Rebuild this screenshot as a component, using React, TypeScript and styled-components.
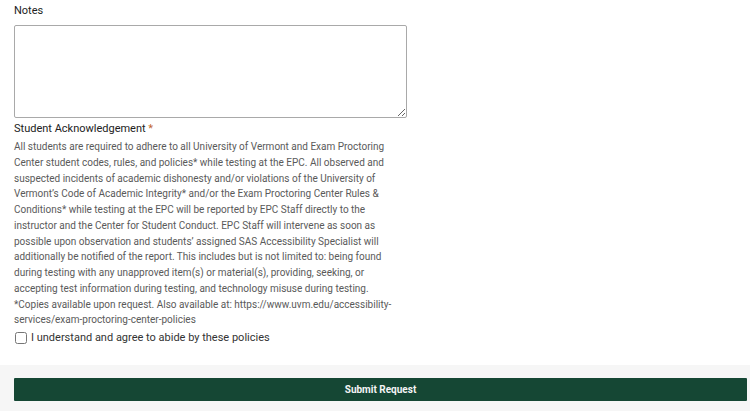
import React from "react";
import styled, { createGlobalStyle } from "styled-components";

const Global = createGlobalStyle`
  html, body { margin: 0; padding: 0; background: #ffffff; }
  body { font-family: Roboto, "Liberation Sans", Arial, sans-serif; }
`;

const Page = styled.div`
  display: flex;
  flex-direction: column;
`;

const Form = styled.div`
  display: flex;
  flex-direction: column;
  padding: 3px 14px 0 14px;
  width: 395px;
`;

const Label = styled.label`
  font-size: 11px;
  line-height: 15px;
  color: #222;
  font-weight: 400;
  display: block;
`;

const Required = styled.span`
  color: #c2672e;
`;

const NotesArea = styled.textarea`
  box-sizing: border-box;
  width: 393px;
  height: 93px;
  margin: 7px 0 3px 0;
  border: 1px solid #a9a9a9;
  border-radius: 2px;
  resize: vertical;
  font-family: inherit;
  display: block;
`;

const Paragraph = styled.p`
  margin: 3px 0 0 0;
  font-size: 10px;
  line-height: 15.75px;
  color: #5a5a5a;
  width: 395px;
`;

const CheckRow = styled.label`
  display: flex;
  align-items: center;
  gap: 4px;
  margin-top: 2px;
  font-size: 11px;
  color: #333;
  line-height: 15px;
`;

const Box = styled.input`
  width: 12px;
  height: 12px;
  margin: 0 0 0 1px;
  accent-color: #154734;
`;

const Footer = styled.div`
  margin-top: 20px;
  background: #f6f6f6;
  padding: 13px 3px 10px 14px;
`;

const Submit = styled.button`
  display: block;
  width: 733px;
  height: 23px;
  border: none;
  border-radius: 1px;
  background: #154734;
  color: #f4f4f4;
  font-family: Roboto, "Liberation Sans", Arial, sans-serif;
  font-size: 10px;
  font-weight: 700;
  cursor: pointer;
`;

export default function App() {
  return (
    <Page>
      <Global />
      <Form>
        <Label>Notes</Label>
        <NotesArea />
        <Label>
          Student Acknowledgement <Required>*</Required>
        </Label>
        <Paragraph>
          All students are required to adhere to all University of Vermont and Exam Proctoring
          Center student codes, rules, and policies* while testing at the EPC. All observed and
          suspected incidents of academic dishonesty and/or violations of the University of
          Vermont’s Code of Academic Integrity* and/or the Exam Proctoring Center Rules &amp;
          Conditions* while testing at the EPC will be reported by EPC Staff directly to the
          instructor and the Center for Student Conduct. EPC Staff will intervene as soon as
          possible upon observation and students’ assigned SAS Accessibility Specialist will
          additionally be notified of the report. This includes but is not limited to: being found
          during testing with any unapproved item(s) or material(s), providing, seeking, or
          accepting test information during testing, and technology misuse during testing.
          <br />
          *Copies available upon request. Also available at: https://www.uvm.edu/accessibility-services/exam-proctoring-center-policies
        </Paragraph>
        <CheckRow>
          <Box type="checkbox" />
          I understand and agree to abide by these policies
        </CheckRow>
      </Form>
      <Footer>
        <Submit>Submit Request</Submit>
      </Footer>
    </Page>
  );
}
